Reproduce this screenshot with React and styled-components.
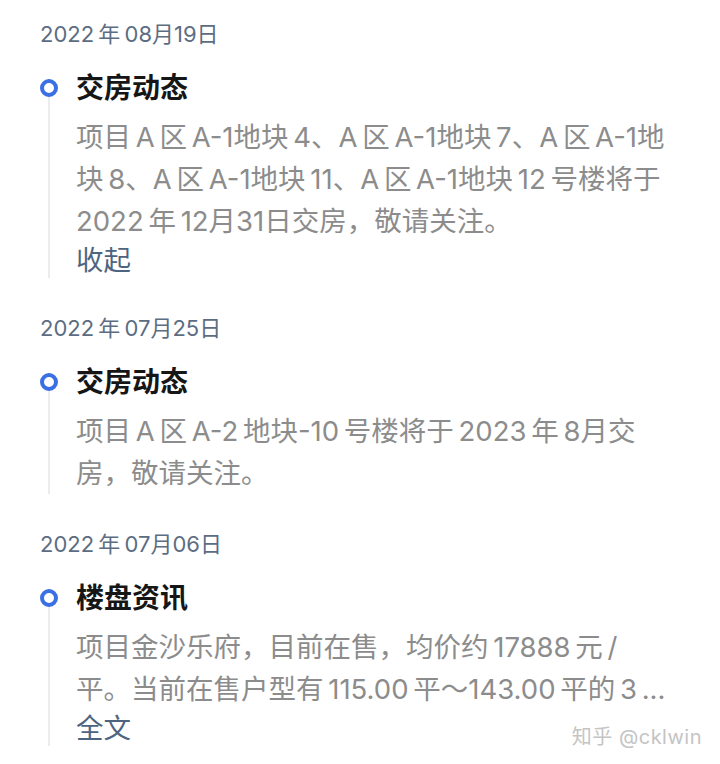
import React from "react";
import styled, { createGlobalStyle } from "styled-components";

const GlobalStyle = createGlobalStyle`
  html, body {
    margin: 0;
    padding: 0;
    background: #fff;
  }
  body {
    font-family: "Inter", "Noto Sans CJK SC", sans-serif;
  }
`;

const events = [
  {
    date: "2022 年 08月19日",
    title: "交房动态",
    body: "项目 A 区 A-1地块 4、A 区 A-1地块 7、A 区 A-1地块 8、A 区 A-1地块 11、A 区 A-1地块 12 号楼将于 2022 年 12月31日交房，敬请关注。",
    link: "收起",
  },
  {
    date: "2022 年 07月25日",
    title: "交房动态",
    body: "项目 A 区 A-2 地块-10 号楼将于 2023 年 8月交房，敬请关注。",
  },
  {
    date: "2022 年 07月06日",
    title: "楼盘资讯",
    body: "项目金沙乐府，目前在售，均价约 17888 元 / 平。当前在售户型有 115.00 平～143.00 平的 3 ...",
    link: "全文",
  },
];

const Page = styled.div`
  position: relative;
  height: 764px;
  overflow: hidden;
  padding: 20px 50px 0 40px;
  box-sizing: border-box;
  display: flex;
  flex-direction: column;
  gap: 36px;
`;

const Section = styled.section`
  display: flex;
  flex-direction: column;
  gap: 22px;
`;

const DateLabel = styled.div`
  font-size: 22px;
  line-height: 28px;
  color: #5c6d83;
  word-spacing: -2px;
`;

const Item = styled.div`
  display: flex;
`;

const Rail = styled.div`
  width: 36px;
  flex-shrink: 0;
  display: flex;
  flex-direction: column;
  padding-top: 9px;
`;

const Dot = styled.span`
  width: 18px;
  height: 18px;
  box-sizing: border-box;
  border: 4px solid #3a70e4;
  border-radius: 50%;
`;

const Line = styled.span`
  flex: 1;
  width: 1.5px;
  margin-left: 8px;
  background: #ececec;
`;

const Content = styled.div`
  flex: 1;
  min-width: 0;
  display: flex;
  flex-direction: column;
`;

const Title = styled.h3`
  margin: 0 0 10px;
  font-size: 28px;
  line-height: 36px;
  font-weight: 700;
  color: #161616;
`;

const Body = styled.p`
  margin: 0;
  font-size: 27.5px;
  line-height: 42px;
  word-spacing: -3px;
  color: #8c8c8c;
  display: -webkit-box;
  -webkit-box-orient: vertical;
  -webkit-line-clamp: 3;
  overflow: hidden;
`;

const Toggle = styled.a`
  font-size: 27.5px;
  line-height: 36px;
  color: #4d6480;
  cursor: pointer;
`;

const Watermark = styled.div`
  position: absolute;
  right: 18px;
  bottom: 14px;
  font-size: 20px;
  color: #c4c4c4;
  text-shadow: 0 0 1px #fff;
  letter-spacing: 0.5px;
`;

const App = () => (
  <>
    <GlobalStyle />
    <Page>
      {events.map((e) => (
        <Section key={e.date}>
          <DateLabel>{e.date}</DateLabel>
          <Item>
            <Rail>
              <Dot />
              <Line />
            </Rail>
            <Content>
              <Title>{e.title}</Title>
              <Body>{e.body}</Body>
              {e.link && <Toggle>{e.link}</Toggle>}
            </Content>
          </Item>
        </Section>
      ))}
      <Watermark>知乎 @cklwin</Watermark>
    </Page>
  </>
);

export default App;
